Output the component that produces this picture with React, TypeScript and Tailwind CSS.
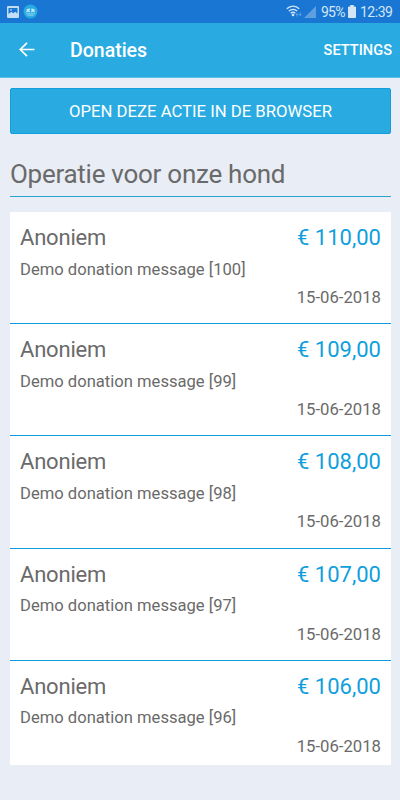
type Donation = {
  name: string;
  amount: string;
  message: string;
  date: string;
};

const DONATIONS: Donation[] = [
  { name: "Anoniem", amount: "€ 110,00", message: "Demo donation message [100]", date: "15-06-2018" },
  { name: "Anoniem", amount: "€ 109,00", message: "Demo donation message [99]", date: "15-06-2018" },
  { name: "Anoniem", amount: "€ 108,00", message: "Demo donation message [98]", date: "15-06-2018" },
  { name: "Anoniem", amount: "€ 107,00", message: "Demo donation message [97]", date: "15-06-2018" },
  { name: "Anoniem", amount: "€ 106,00", message: "Demo donation message [96]", date: "15-06-2018" },
];

function StatusBar() {
  return (
    <div className="flex h-[23px] items-center bg-[#1976d2] pl-[7px] pr-[8px] text-[#d3e6f8]">
      <svg width="12" height="12" viewBox="0 0 12 12" aria-hidden="true">
        <path
          d="M1 0h10a1 1 0 0 1 1 1v10a1 1 0 0 1-1 1H1a1 1 0 0 1-1-1V1a1 1 0 0 1 1-1Zm.5 2v6l3-2.2 1.700 1.400 2-1.400 2.300 1.700V2Z"
          fill="#c5dcf6"
          fillRule="evenodd"
        />
        <path d="M3 3.200h1.800v1.400H3z" fill="#c5dcf6" />
      </svg>
      <svg className="ml-[4px]" width="15" height="15" viewBox="0 0 15 15" aria-hidden="true">
        <circle cx="7.5" cy="7.5" r="7" fill="#29abe2" />
        <path d="M3 9.800h9M4.500 11.200h6" stroke="#8fd4f2" strokeWidth=".9" />
        <path
          d="M3.500 5h1.800l1-1 .7 1.300-.8 1 1 2H5.800l-.7-1-1 1H2.800l1.200-2ZM8 5.500l1-1.300 1 .8h1.700l-.5 1.400 1 1.900h-1.300l-.8-1-.8 1H7.800L8.700 6.500Z"
          fill="#c5e9f8"
        />
      </svg>
      <div className="flex-1" />
      <svg width="16" height="13" viewBox="0 0 16 13" fill="none" stroke="currentColor" aria-hidden="true">
        <path
          d="M.8 3.800C4.300.2 9.700.2 13.200 3.800M2.800 6.100C5.200 3.700 8.800 3.700 11.200 6.100M4.700 8.200C6.100 6.900 7.900 6.900 9.300 8.200"
          strokeWidth="1.300"
        />
        <circle cx="7" cy="9.900" r="1.300" fill="currentColor" stroke="none" />
        <path
          d="M11 11.500V8.500M10 9.700l1-1 1 1M14.200 7.500v3M13.200 9.500l1 1 1-1"
          strokeWidth=".7"
          opacity=".6"
        />
      </svg>
      <svg className="ml-[2px]" width="12" height="12" viewBox="0 0 12 12" aria-hidden="true">
        <path d="M12 0v12H0Z" fill="#5f9fe0" />
      </svg>
      <span className="ml-[5px] w-[24px] whitespace-nowrap pt-px text-[14px] leading-[22px] tracking-[-0.8px]">95%</span>
      <svg className="ml-[3px]" width="8" height="13" viewBox="0 0 8 13" aria-hidden="true">
        <path
          d="M2.300 0h3.400v1.400H7.200a.8.8 0 0 1 .8.8v10a.8.8 0 0 1-.8.8H.8a.8.8 0 0 1-.8-.8v-10a.8.8 0 0 1 .8-.8h1.500Z"
          fill="currentColor"
        />
      </svg>
      <span className="ml-[4px] w-[32px] whitespace-nowrap pt-px text-[14px] leading-[22px] tracking-[-0.5px]">12:39</span>
    </div>
  );
}

function AppBar() {
  return (
    <header className="box-content flex h-[54px] items-center border-b border-[#5fc0e9] bg-[#29abe2] pl-[19px] pr-[8px] text-white">
      <svg width="16" height="16" viewBox="0 0 16 16" fill="none" stroke="currentColor" strokeWidth="1.700" aria-hidden="true">
        <path d="M15.500 7.500H1.500M8 .8 1.300 7.500l6.700 6.700" />
      </svg>
      <h1 className="ml-[35px] flex-1 pt-[2px] text-[19.500px] font-medium leading-[54px]">Donaties</h1>
      <button type="button" className="pt-[2px] text-[14.600px] font-medium">
        SETTINGS
      </button>
    </header>
  );
}

function DonationRow({ donation }: { donation: Donation }) {
  return (
    <li className="h-[112.200px] border-b border-[#109fdc] px-[10px] pt-[12px] last:h-[104.500px] last:border-b-0">
      <div className="flex items-center justify-between text-[22px] leading-[28px]">
        <span className="tracking-[-0.2px]">{donation.name}</span>
        <span className="text-[#109fdc]">{donation.amount}</span>
      </div>
      <p className="mt-[6.500px] text-[16.600px] leading-[22px]">{donation.message}</p>
      <p className="mt-[6.500px] text-right text-[16.700px] leading-[22px]">{donation.date}</p>
    </li>
  );
}

export default function App() {
  return (
    <div className="h-[800px] w-[400px] overflow-hidden bg-[#e9edf5] font-['Roboto',sans-serif] text-[#6a6a6a]">
      <StatusBar />
      <AppBar />
      <main className="pl-[10px] pr-[9px] pt-[10px]">
        <button
          type="button"
          className="block h-[46px] w-full rounded-[2px] border border-[#109fdc] bg-[#29abe2] pt-px text-[16.700px] text-white"
        >
          OPEN DEZE ACTIE IN DE BROWSER
        </button>
        <h2 className="mt-[17px] h-[46px] border-b border-[#2ba3cf] text-[26px] leading-[46px] tracking-[-0.27px]">
          Operatie voor onze hond
        </h2>
        <ul className="mt-[15px] bg-white">
          {DONATIONS.map((donation) => (
            <DonationRow key={donation.amount} donation={donation} />
          ))}
        </ul>
      </main>
    </div>
  );
}
